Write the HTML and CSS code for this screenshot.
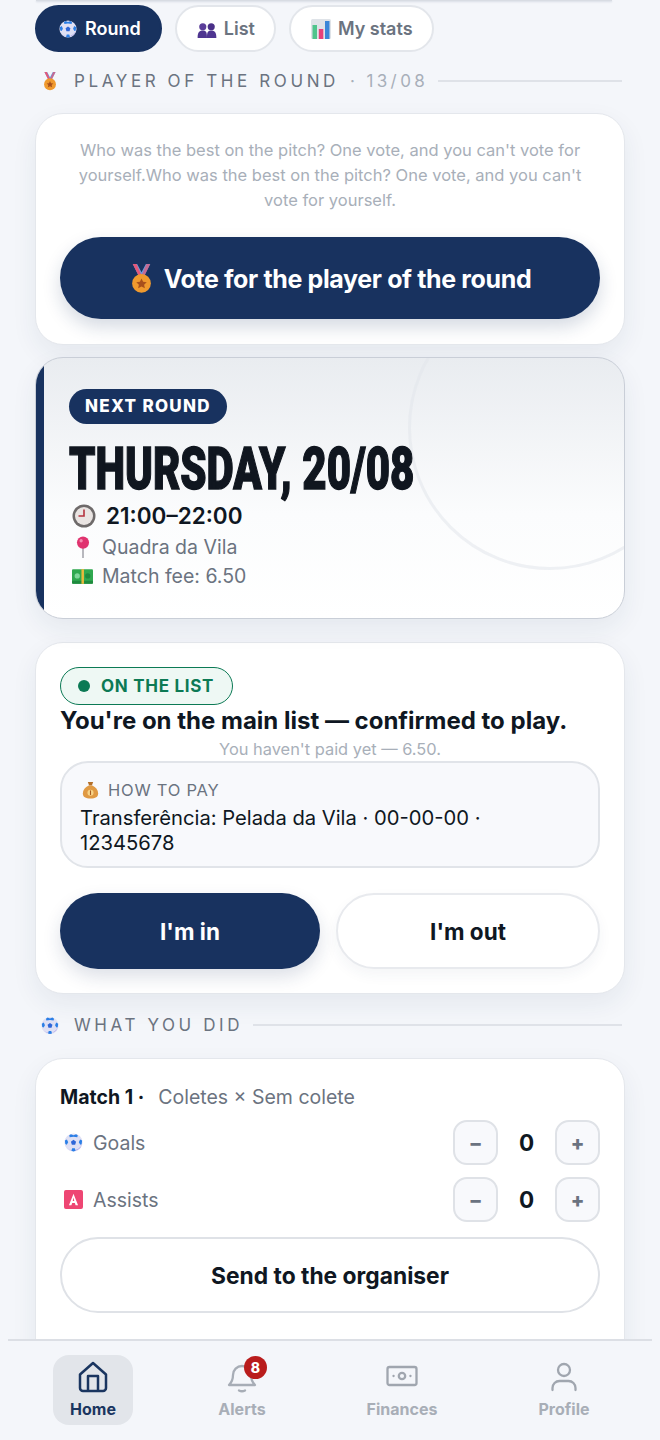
FILE: index.html
```html
<!DOCTYPE html>
<html lang="en">
<head>
<meta charset="utf-8">
<title>Round</title>
<link rel="stylesheet" href="styles.css">
</head>
<body>
<svg class="defs" width="0" height="0" aria-hidden="true">
  <symbol id="e-ball" viewBox="0 0 20 20">
    <circle cx="10" cy="10" r="9.500" fill="#dfe0f4"/>
    <path d="M3 15.500a9.500 9.500 0 0 0 14.500-.500A10 10 0 0 1 19 10a9.500 9.500 0 0 1-16 5.500z" fill="#a79bea"/>
    <path d="M10 7.200l2.700 2-1 3.200H8.300l-1-3.200z" fill="#2f66d8"/>
    <path d="M7.300 1.200 10 2.300l2.700-1.100 1.800 1.200-.5 2.100L10 3.900 6 4.500l-.5-2.100zM.9 8l2.200-1.200 1.300 3-1.500 2.500-1.500-.6zM19.100 8l-2.200-1.200-1.300 3 1.500 2.500 1.500-.6zM7.800 18.800l.8-2.800h2.800l.8 2.800-2.200.7z" fill="#2b7fe6"/>
  </symbol>
  <symbol id="e-medal" viewBox="0 0 20 24">
    <path d="M3 0l5 10h4l5-10h-3.500L10 6.500 6.500 0z" fill="#6a9fe0"/>
    <path d="M3 0l5 10h2.500L6 0z" fill="#e4587a"/>
    <path d="M17 0l-5 10H9.500L14 0z" fill="#e4587a" opacity=".75"/>
    <circle cx="10" cy="15.500" r="7.500" fill="#f09a2e"/>
    <path d="M10 11.500l1.300 2.700 2.900.3-2.100 2 .6 2.900-2.700-1.500-2.700 1.500.6-2.900-2.100-2 2.900-.3z" fill="#a8501c"/>
  </symbol>
  <symbol id="e-people" viewBox="0 0 20 16">
    <circle cx="5.500" cy="4" r="3.800" fill="#5a3d99"/>
    <circle cx="14.500" cy="4" r="3.800" fill="#4a3088"/>
    <path d="M0 16c0-6 1.500-8 5.500-8s4.500 2 4.500 8zM10 16c0-6 .5-8 4.500-8s5.500 2 5.500 8z" fill="#4e3590"/>
  </symbol>
  <symbol id="e-chart" viewBox="0 0 20 20">
    <rect width="20" height="20" rx="1.500" fill="#dfe3e8"/>
    <rect x="1.500" y="6" width="4.500" height="14" fill="#4fc48c"/>
    <rect x="7.800" y="10" width="4.500" height="10" fill="#e6407a"/>
    <rect x="14" y="2" width="4.500" height="18" fill="#3a86d8"/>
  </symbol>
  <symbol id="e-clock" viewBox="0 0 24 24">
    <circle cx="12" cy="12" r="11.500" fill="#6e6a6a"/>
    <circle cx="12" cy="12" r="9" fill="#e9e4e2"/>
    <path d="M12 5.500V12H6.500" fill="none" stroke="#b5323e" stroke-width="1.600"/>
  </symbol>
  <symbol id="e-pin" viewBox="0 0 16 20">
    <rect x="7.300" y="8" width="1.400" height="12" fill="#a3a3ab"/>
    <circle cx="8" cy="6" r="5.500" fill="#e0336f"/>
    <circle cx="6.300" cy="4.300" r="1.500" fill="#f58bb0"/>
  </symbol>
  <symbol id="e-money" viewBox="0 0 20 16">
    <rect y="1" width="20" height="14" rx="1" fill="#2fa84f"/>
    <rect y="12" width="20" height="3" rx="1" fill="#1f8a3e"/>
    <rect x="9" y="1" width="2.400" height="14" fill="#e8b93c"/>
    <circle cx="15" cy="7.500" r="2.500" fill="#1f8a3e"/>
    <circle cx="5" cy="7.500" r="2.500" fill="#7fd69a"/>
  </symbol>
  <symbol id="e-bag" viewBox="0 0 18 20">
    <path d="M6 1h6l-1.500 4h-3z" fill="#b5702a"/>
    <path d="M7 5h4c4 2 6.500 5 6.500 9 0 4-3 5.500-8.500 5.500S.5 18 .5 14c0-4 2.500-7 6.500-9z" fill="#e09a44"/>
    <circle cx="9" cy="13" r="3.400" fill="#f7d488"/>
    <rect x="8.400" y="10.500" width="1.200" height="5" fill="#a85a20"/>
  </symbol>
  <symbol id="e-a" viewBox="0 0 20 20">
    <rect width="20" height="20" rx="2" fill="#ee4673"/>
    <path d="M10 4l4.800 12h-2.600l-.8-2.300H8.600L7.800 16H5.200zM10 8l-.8 3.500h1.600z" fill="#fff"/>
  </symbol>
</svg>

<div class="top-edge"></div>

<nav class="tabs">
  <a class="tab tab-active"><svg class="emo e-ball-tab"><use href="#e-ball"/></svg>Round</a>
  <a class="tab"><svg class="emo e-people"><use href="#e-people"/></svg>List</a>
  <a class="tab"><svg class="emo e18"><use href="#e-chart"/></svg>My stats</a>
</nav>

<div class="section s-first">
  <svg class="emo sec-emo"><use href="#e-medal"/></svg>
  <span class="sec-title">PLAYER OF THE ROUND</span>
  <span class="sec-date">· 13/08</span>
  <span class="sec-line"></span>
</div>

<section class="card card-vote">
  <p class="hint">Who was the best on the pitch? One vote, and you can't vote for yourself.Who was the best on the pitch? One vote, and you can't vote for yourself.</p>
  <button class="btn-vote"><svg class="emo e-medal-big"><use href="#e-medal"/></svg>Vote for the player of the round</button>
</section>

<section class="card card-next">
  <span class="ring"></span>
  <span class="badge-next">NEXT ROUND</span>
  <h1 class="date">THURSDAY, 20/08</h1>
  <div class="time"><svg class="emo e24"><use href="#e-clock"/></svg>21:00–22:00</div>
  <div class="meta"><svg class="emo e-pin"><use href="#e-pin"/></svg>Quadra da Vila</div>
  <div class="meta"><svg class="emo e-money"><use href="#e-money"/></svg>Match fee: 6.50</div>
</section>

<section class="card card-list">
  <span class="status"><i class="dot"></i>ON THE LIST</span>
  <h2 class="confirmed">You're on the main list — confirmed to play.</h2>
  <p class="unpaid">You haven't paid yet — 6.50.</p>
  <div class="pay">
    <div class="pay-label"><svg class="emo e-bag"><use href="#e-bag"/></svg>HOW TO PAY</div>
    <div class="pay-text">Transferência: Pelada da Vila · 00-00-00 · 12345678</div>
  </div>
  <div class="actions">
    <button class="btn btn-in">I'm in</button>
    <button class="btn btn-out">I'm out</button>
  </div>
</section>

<div class="section s-second">
  <svg class="emo sec-emo"><use href="#e-ball"/></svg>
  <span class="sec-title">WHAT YOU DID</span>
  <span class="sec-line"></span>
</div>

<section class="card card-match">
  <div class="match-head"><b>Match 1 ·</b><span>Coletes × Sem colete</span></div>
  <div class="stat">
    <div class="stat-name"><svg class="emo e20"><use href="#e-ball"/></svg>Goals</div>
    <div class="stepper"><button class="step">−</button><span class="val">0</span><button class="step">+</button></div>
  </div>
  <div class="stat stat-2">
    <div class="stat-name"><svg class="emo e20"><use href="#e-a"/></svg>Assists</div>
    <div class="stepper"><button class="step">−</button><span class="val">0</span><button class="step">+</button></div>
  </div>
  <button class="btn-send">Send to the organiser</button>
</section>

<nav class="bottom">
  <a class="nav-item nav-home">
    <svg class="nav-ico" viewBox="0 0 32 32" fill="none" stroke="#1a3560" stroke-width="2.500" stroke-linejoin="round"><path d="M3 13.500 16 2l13 11.500V27a3 3 0 0 1-3 3H6a3 3 0 0 1-3-3z"/><path d="M11 30V15h10v15"/></svg>
    <span>Home</span>
  </a>
  <a class="nav-item nav-alerts">
    <span class="ico-wrap">
      <svg class="nav-ico" viewBox="0 0 32 32" fill="none" stroke="#a7adb6" stroke-width="2.300" stroke-linecap="round" stroke-linejoin="round"><path d="M3 24c3-3 4-5 4-10a9 9 0 0 1 18 0c0 5 1 7 4 10z"/><path d="M13 29.500c2 1 4 1 6 0"/></svg>
      <b class="count">8</b>
    </span>
    <span>Alerts</span>
  </a>
  <a class="nav-item nav-fin">
    <svg class="nav-ico" viewBox="0 0 32 32" fill="none" stroke="#a0a6af" stroke-width="2.300" stroke-linecap="round"><rect x="1.500" y="6" width="29" height="18" rx="2"/><circle cx="16" cy="15" r="3.200"/><path d="M7.500 15h.1M24.400 15h.1"/></svg>
    <span>Finances</span>
  </a>
  <a class="nav-item nav-prof">
    <svg class="nav-ico" viewBox="0 0 32 32" fill="none" stroke="#a0a6af" stroke-width="2.300" stroke-linecap="round"><circle cx="16" cy="9" r="6"/><path d="M4.500 29v-2a7 7 0 0 1 7-7h9a7 7 0 0 1 7 7v2"/></svg>
    <span>Profile</span>
  </a>
</nav>
</body>
</html>
```
FILE: styles.css
```css
* { box-sizing: border-box; }
html, body { margin: 0; height: 1440px; overflow: hidden; }
body {
  padding: 0 35px;
  background: #f4f6fa;
  font-family: Inter, "Liberation Sans", sans-serif;
  color: #0f1722;
}
.defs { position: absolute; }
.emo { display: block; flex: none; }
.e18 { width: 20px; height: 20px; }
.e20 { width: 19px; height: 19px; }
.e24 { width: 24px; height: 24px; }
.e-ball-tab { width: 18px; height: 18px; margin: 0 1px 0 2px; }
.e-people { width: 20px; height: 15px; margin-top: 4px; }
.e-medal-big { width: 25px; height: 30px; }
.e-pin { width: 18px; height: 22px; margin: 0 1.500px; }
.e-money { width: 21px; height: 17px; }
.e-bag { width: 17px; height: 18px; }

.top-edge {
  height: 1px;
  width: 576px;
  margin-left: 1px;
  background: #d8dce3;
  box-shadow: 0 1px 2px rgba(30, 50, 90, .18);
}

.tabs { display: flex; gap: 13px; padding-top: 4px; }
.tab {
  height: 47px;
  display: flex;
  align-items: center;
  gap: 7px;
  padding: 0 19px 0 20px;
  border-radius: 24px;
  background: #fff;
  border: 2px solid #e3e6eb;
  font-size: 18px;
  font-weight: 600;
  color: #6b7380;
}
.tab-active {
  background: #18325f;
  border-color: #18325f;
  color: #fff;
}

.section { display: flex; align-items: center; height: 24px; padding-left: 6px; }
.s-first { margin-top: 17px; }
.s-second { margin-top: 19px; }
.sec-emo { width: 18px; height: 19px; margin-right: 15px; }
.sec-title {
  font-size: 17px;
  letter-spacing: 3.600px;
  color: #6b7380;
  white-space: nowrap;
}
.sec-date {
  font-size: 17px;
  letter-spacing: 3.400px;
  color: #a8afb9;
  margin-left: 11px;
  white-space: nowrap;
}
.sec-line { flex: 1; height: 2px; background: #dfe2e8; margin: 0 3px 0 10px; }

.card {
  background: #fff;
  border: 1.500px solid #e4e7ec;
  border-radius: 28px;
  box-shadow: 0 10px 26px rgba(30, 50, 90, .07);
}
.card-vote { margin-top: 20px; height: 232px; padding: 24px 24px 0; }
.hint {
  margin: 0;
  text-align: center;
  font-size: 16.500px;
  line-height: 25px;
  color: #a8afb9;
}
.btn-vote {
  margin-top: 24px;
  width: 100%;
  height: 82px;
  padding-top: 2px;
  border: 0;
  border-radius: 41px;
  background: #18325f;
  color: #fff;
  font: 700 25px Inter, sans-serif;
  letter-spacing: -0.370px;
  display: flex;
  align-items: center;
  justify-content: center;
  gap: 10px;
  box-shadow: 0 8px 18px rgba(24, 50, 95, .18);
}

.card-next {
  position: relative;
  overflow: hidden;
  margin-top: 12px;
  height: 262px;
  padding: 30.500px 24px 0 25px;
  border: 1.500px solid #c9ced7;
  background: linear-gradient(180deg, #e9ecf0 0%, #fbfcfd 60%, #fff 100%);
}
.card-next::before {
  content: "";
  position: absolute;
  left: 0; top: 0; bottom: 0;
  width: 8px;
  background: #18325f;
}
.ring {
  position: absolute;
  left: 372px;
  top: -72px;
  width: 284px;
  height: 284px;
  border: 3px solid rgba(225, 229, 235, .55);
  border-radius: 50%;
}
.badge-next {
  position: relative;
  display: block;
  width: fit-content;
  margin-left: 8px;
  height: 35px;
  line-height: 35px;
  padding: 0 16px;
  border-radius: 18px;
  background: #18325f;
  color: #fff;
  font-size: 17px;
  font-weight: 800;
  letter-spacing: 1.300px;
}
.date {
  position: relative;
  width: fit-content;
  margin: 15px 0 0 8px;
  font-family: Roboto, "Liberation Sans", sans-serif;
  font-weight: 900;
  font-size: 60px;
  line-height: 60px;
  color: #10161f;
  -webkit-text-stroke: 1.400px #10161f;
  white-space: nowrap;
  transform: scaleX(.7);
  transform-origin: left center;
}
.time {
  position: relative;
  display: flex;
  align-items: center;
  gap: 10px;
  margin: 2px 0 0 11px;
  height: 30px;
  font-size: 22.500px;
  font-weight: 600;
}
.meta {
  position: relative;
  display: flex;
  align-items: center;
  gap: 9px;
  margin: 2px 0 -2px 11px;
  height: 29px;
  font-size: 19.500px;
  color: #6b7380;
}

.card-list { margin-top: 23px; height: 352px; padding: 24px 24px 0; }
.status {
  display: inline-flex;
  align-items: center;
  gap: 11px;
  height: 38px;
  padding: 0 18px 0 17px;
  border: 1.500px solid #0c7a55;
  border-radius: 19px;
  background: #eef8f4;
  color: #0c7a55;
  font-size: 17px;
  font-weight: 700;
  letter-spacing: .7px;
}
.dot { width: 12px; height: 12px; border-radius: 50%; background: #0c7a55; }
.confirmed {
  margin: 0;
  font-size: 24px;
  line-height: 32px;
  font-weight: 700;
  white-space: nowrap;
}
.unpaid {
  margin: 2px 0 0;
  text-align: center;
  font-size: 16.400px;
  line-height: 20px;
  color: #a8afb9;
}
.pay {
  margin-top: 2px;
  height: 107px;
  padding: 15px 18px 0;
  border: 2px solid #e1e4e9;
  border-radius: 28px;
  background: #f8f9fc;
}
.pay-label {
  display: flex;
  align-items: center;
  gap: 9px;
  padding-left: 2px;
  font-size: 16.500px;
  letter-spacing: .75px;
  line-height: 24px;
  color: #6b7380;
}
.pay-text { font-size: 20.200px; line-height: 25px; margin-top: 3px; }
.actions { display: flex; gap: 16px; margin-top: 25px; }
.btn {
  flex: 1;
  height: 76px;
  border-radius: 38px;
  font: 700 22.500px Inter, sans-serif;
}
.btn-in { background: #18325f; border: 0; color: #fff; box-shadow: 0 8px 18px rgba(24, 50, 95, .15); }
.btn-out { background: #fff; border: 2px solid #e8eaee; color: #0f1722; box-shadow: 0 6px 14px rgba(30, 50, 90, .05); }

.card-match { margin-top: 21px; height: 340px; padding: 24px 24px 0; }
.match-head { display: flex; gap: 14px; font-size: 19.500px; line-height: 28px; color: #6b7380; }
.match-head b { color: #0f1722; font-weight: 700; }
.stat { display: flex; align-items: center; justify-content: space-between; height: 45px; margin-top: 9px; }
.stat-2 { margin-top: 12px; }
.stat-name { display: flex; align-items: center; gap: 10px; padding-left: 4px; font-size: 19.500px; color: #6b7380; }
.stepper { display: flex; align-items: center; }
.step {
  width: 45px;
  height: 45px;
  border-radius: 14px;
  border: 2px solid #dfe2e7;
  background: #f8f9fc;
  color: #6b7380;
  font: 800 20px Inter, sans-serif;
  padding: 0;
}
.val { width: 57px; text-align: center; font-size: 22.500px; font-weight: 700; }
.btn-send {
  display: block;
  width: 100%;
  height: 76px;
  margin-top: 15px;
  border-radius: 38px;
  border: 2px solid #dfe2e7;
  background: #fff;
  font: 700 22.800px Inter, sans-serif;
  color: #0f1722;
}

.bottom {
  position: fixed;
  left: 8px;
  right: 8px;
  bottom: 0;
  height: 101px;
  background: #f4f6fa;
  border-top: 2px solid #dcdfe5;
}
.nav-item {
  position: absolute;
  top: 14px;
  display: flex;
  flex-direction: column;
  align-items: center;
  width: 80px;
  height: 70px;
  padding-top: 6px;
  font-size: 16px;
  font-weight: 700;
  color: #a8aeb7;
}
.nav-item > span:last-child { margin-top: 6px; line-height: 20px; }
.nav-ico { display: block; width: 32px; height: 32px; }
.nav-home { left: 45px; background: #e2e5ea; border-radius: 16px; color: #1a3560; }
.nav-alerts { left: 194px; }
.nav-fin { left: 354px; }
.nav-prof { left: 516px; }
.ico-wrap { position: relative; display: block; height: 32px; }
.count {
  position: absolute;
  left: 18px;
  top: -5px;
  width: 23px;
  height: 23px;
  border-radius: 50%;
  background: #b91c1c;
  color: #fff;
  font-size: 14px;
  font-weight: 800;
  line-height: 23px;
  text-align: center;
}
```
